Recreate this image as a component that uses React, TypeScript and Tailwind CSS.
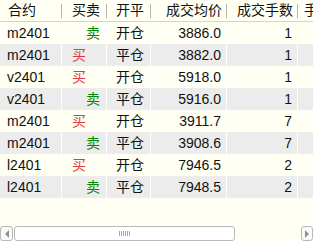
import React from "react";

const rows = [
  { c: "m2401", side: "sell", oc: "开仓", price: "3886.0", qty: "1" },
  { c: "m2401", side: "buy", oc: "平仓", price: "3882.0", qty: "1" },
  { c: "v2401", side: "buy", oc: "开仓", price: "5918.0", qty: "1" },
  { c: "v2401", side: "sell", oc: "平仓", price: "5916.0", qty: "1" },
  { c: "m2401", side: "buy", oc: "开仓", price: "3911.7", qty: "7" },
  { c: "m2401", side: "sell", oc: "平仓", price: "3908.6", qty: "7" },
  { c: "l2401", side: "buy", oc: "开仓", price: "7946.5", qty: "2" },
  { c: "l2401", side: "sell", oc: "平仓", price: "7948.5", qty: "2" },
];

const font = "font-['Liberation_Sans','Noto_Sans_CJK_SC',sans-serif]";

function HeadCell({ w, children, align }: { w: string; children?: React.ReactNode; align: string }) {
  return (
    <div className={`${w} h-full flex items-center shrink-0 relative ${align}`}>
      {children}
      <div className="absolute right-0 top-[4px] h-[14px] w-px bg-[#b4b4b4]" />
    </div>
  );
}

export default function App() {
  return (
    <div className={`w-[313px] h-[241px] bg-[#fffff4] flex flex-col overflow-hidden text-[14px] text-[#111] ${font}`}>
      <div className="flex-1 overflow-hidden">
        <div className="flex h-[21px] border-b border-[#d4d4d0] box-content">
          <HeadCell w="w-[62px]" align="pl-[8px]">合约</HeadCell>
          <HeadCell w="w-[45px]" align="justify-end pr-[7px]">买卖</HeadCell>
          <HeadCell w="w-[44px]" align="pl-[9px]">开平</HeadCell>
          <HeadCell w="w-[76px]" align="justify-end pr-[5px]">成交均价</HeadCell>
          <HeadCell w="w-[71px]" align="justify-end pr-[5px]">成交手数</HeadCell>
          <div className="w-[30px] h-full flex items-center pl-[6px]">手</div>
        </div>
        {rows.map((r, i) => (
          <div key={i} className={`flex h-[22px] ${i % 2 === 1 ? "bg-[#ececec]" : ""}`}>
            <div className="w-[62px] shrink-0 border-r border-white flex items-center pl-[7px]">{r.c}</div>
            <div className="w-[45px] shrink-0 border-r border-white flex items-center">
              {r.side === "buy" ? (
                <span className="pl-[10px] text-[#e03c3c]">买</span>
              ) : (
                <span className="ml-auto pr-[6px] text-[#008a00]">卖</span>
              )}
            </div>
            <div className="w-[44px] shrink-0 border-r border-white flex items-center pl-[9px]">{r.oc}</div>
            <div className="w-[76px] shrink-0 border-r border-white flex items-center justify-end pr-[5px]">{r.price}</div>
            <div className="w-[71px] shrink-0 border-r border-white flex items-center justify-end pr-[5px]">{r.qty}</div>
            <div className="flex-1" />
          </div>
        ))}
      </div>
      <div className="h-[15px] flex items-stretch bg-[#fffff4] mb-0">
        <div className="w-[13px] border border-[#b8b8b8] rounded-[3px] flex items-center justify-center bg-[#fafafa]">
          <div className="w-0 h-0 border-y-[4px] border-y-transparent border-r-[4px] border-r-[#909090]" />
        </div>
        <div className="w-[221px] ml-px border border-[#b8b8b8] rounded-[3px] bg-white flex items-center justify-center">
          <div className="flex gap-px">
            {[0, 1, 2, 3, 4, 5].map((k) => (
              <div key={k} className="w-px h-[5px] bg-[#a8a8a8]" />
            ))}
          </div>
        </div>
        <div className="flex-1" />
        <div className="w-[12px] border border-[#b8b8b8] rounded-[3px] flex items-center justify-center bg-[#fafafa]">
          <div className="w-0 h-0 border-y-[4px] border-y-transparent border-l-[4px] border-l-[#909090]" />
        </div>
      </div>
    </div>
  );
}
